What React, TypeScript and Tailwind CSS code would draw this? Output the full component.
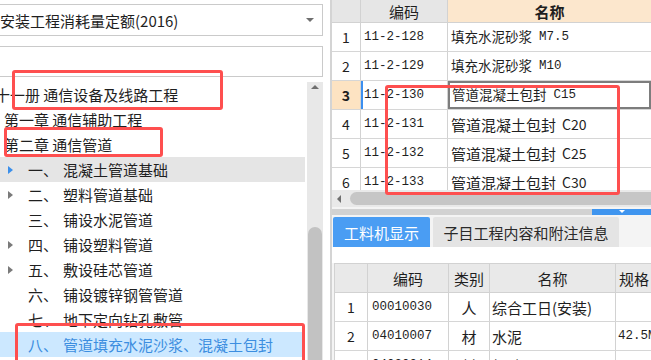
import type { ReactNode } from "react";

const treeChildren = [
  { num: "一、", label: "混凝土管道基础", arrow: "blue", hover: true },
  { num: "二、", label: "塑料管道基础", arrow: "gray" },
  { num: "三、", label: "铺设水泥管道" },
  { num: "四、", label: "铺设塑料管道", arrow: "gray" },
  { num: "五、", label: "敷设硅芯管道", arrow: "gray" },
  { num: "六、", label: "铺设镀锌钢管管道" },
  { num: "七、", label: "地下定向钻孔敷管" },
  { num: "八、", label: "管道填充水泥沙浆、混凝土包封", selected: true },
];

const quotaRows = [
  { n: "1", code: "11-2-128", name: "填充水泥砂浆", grade: "M7.5", big: false },
  { n: "2", code: "11-2-129", name: "填充水泥砂浆", grade: "M10", big: false },
  { n: "3", code: "11-2-130", name: "管道混凝土包封", grade: "C15", big: false, active: true },
  { n: "4", code: "11-2-131", name: "管道混凝土包封", grade: "C20", big: true },
  { n: "5", code: "11-2-132", name: "管道混凝土包封", grade: "C25", big: true },
  { n: "6", code: "11-2-133", name: "管道混凝土包封", grade: "C30", big: true },
];

const materialRows = [
  { n: "1", code: "00010030", type: "人", name: "综合工日(安装)", spec: "" },
  { n: "2", code: "04010007", type: "材", name: "水泥", spec: "42.5MPa" },
  { n: "3", code: "04030014", type: "材", name: "粗砂", spec: "" },
];

function RightArrow({ color }: { color: string }) {
  return color === "blue" ? (
    <span className="block h-0 w-0 border-y-[4px] border-l-[5px] border-y-transparent border-l-[#3b8fea]" />
  ) : (
    <span className="block h-0 w-0 border-y-[4px] border-l-[5px] border-y-transparent border-l-[#7a7a7a]" />
  );
}

function LeftPanel() {
  return (
    <aside className="flex w-[332px] shrink-0 flex-col border-r-2 border-[#d4d4d4] bg-white pt-[4px]">
      <div className="-ml-[8px] mr-[7px] flex h-[32px] items-center border border-[#cacaca] bg-white pl-[7px] pr-[8px] text-[15px] leading-none">
        <span>安装工程消耗量定额(2016)</span>
        <span className="ml-auto block h-0 w-0 border-x-[4px] border-t-[4px] border-x-transparent border-t-[#6f6f6f]" />
      </div>
      <div className="-ml-[8px] mr-[7px] mt-[10px] h-[31px] border border-[#cacaca] bg-white" />
      <div className="mt-[5px] flex min-h-0 flex-1">
        <div className="-ml-[8px] w-[313px] shrink-0 text-[15px] leading-none">
          <div className="flex h-[25px] items-center pl-[3px]">十一册 通信设备及线路工程</div>
          <div className="flex h-[25px] items-center pl-[12px]">第一章 通信辅助工程</div>
          <div className="flex h-[25px] items-center pl-[12px]">第二章 通信管道</div>
          {treeChildren.map((row) => (
            <div
              key={row.num}
              className={
                row.selected
                  ? "flex h-[25px] items-center bg-[#cce8ff] text-[#3c8ee0]"
                  : row.hover
                    ? "flex h-[25px] items-center bg-[#e5e5e5]"
                    : "flex h-[25px] items-center"
              }
            >
              <span className="flex w-[36px] shrink-0 pl-[16px]">{row.arrow && <RightArrow color={row.arrow} />}</span>
              <span className="w-[35px] shrink-0">{row.num}</span>
              <span className="whitespace-nowrap">{row.label}</span>
            </div>
          ))}
        </div>
        <div className="ml-[2px] flex w-[16px] shrink-0 flex-col items-center bg-[#e8e8e8]">
          <span className="mt-[3px] block h-0 w-0 border-x-[4px] border-b-[4px] border-x-transparent border-b-[#6f6f6f]" />
          <div className="mt-[138px] w-[14px] flex-1 rounded-t-full bg-[#c2c2c2]" />
        </div>
      </div>
    </aside>
  );
}

function Cell({ className, children }: { className: string; children?: ReactNode }) {
  return <div className={className}>{children}</div>;
}

function QuotaTable() {
  return (
    <div className="h-[190px] shrink-0 overflow-hidden bg-white">
      <div className="flex h-[23px] border-b border-[#d2d2d2] text-[15px] leading-none">
        <Cell className="w-[29px] shrink-0 border-r border-[#d2d2d2] bg-[#e6e6e6]" />
        <Cell className="flex w-[87px] shrink-0 items-center justify-center border-r border-[#d2d2d2] bg-[#e6e6e6]">编码</Cell>
        <Cell className="flex flex-1 items-center justify-center bg-[#fce7cd] font-bold">名称</Cell>
      </div>
      {quotaRows.map((r) => (
        <div key={r.n} className="flex h-[29px] border-b border-[#d6d6d6] leading-none">
          <Cell
            className={
              r.active
                ? "flex w-[29px] shrink-0 items-center justify-center border-r border-[#d2d2d2] bg-[#fde3c2] text-[14px] font-bold"
                : "flex w-[29px] shrink-0 items-center justify-center border-r border-[#d2d2d2] text-[14px]"
            }
          >
            {r.n}
          </Cell>
          <Cell
            className={
              r.active
                ? "flex w-[87px] shrink-0 items-center border-l-2 border-r border-l-[#3b8ff0] border-r-[#d2d2d2] pl-[1px] font-['Liberation_Mono',monospace] text-[12.5px]"
                : "flex w-[87px] shrink-0 items-center border-r border-[#d2d2d2] pl-[3px] font-['Liberation_Mono',monospace] text-[12.5px]"
            }
          >
            {r.code}
          </Cell>
          <Cell
            className={
              r.active
                ? "flex flex-1 items-center border-2 border-[#7d7d7d] pl-[2px] whitespace-nowrap"
                : "flex flex-1 items-center pl-[3px] whitespace-nowrap"
            }
          >
            {r.big ? (
              <>
                <span className="text-[15px]">{r.name}</span>
                <span className="ml-[6px] text-[14px]">{r.grade}</span>
              </>
            ) : (
              <>
                <span className="text-[13.5px]">{r.name}</span>
                <span className="ml-[7px] font-['Liberation_Mono',monospace] text-[12.5px]">{r.grade}</span>
              </>
            )}
          </Cell>
        </div>
      ))}
    </div>
  );
}

function MaterialTable() {
  return (
    <div className="ml-[2px] flex-1 border-l border-[#d2d2d2] bg-white text-[15px] leading-none">
      <div className="flex h-[30px] border-b border-t border-[#d2d2d2] bg-[#e9e9e9]">
        <Cell className="w-[33px] shrink-0 border-r border-[#d2d2d2]" />
        <Cell className="flex w-[81px] shrink-0 items-center justify-center border-r border-[#d2d2d2]">编码</Cell>
        <Cell className="flex w-[41px] shrink-0 items-center justify-center border-r border-[#d2d2d2]">类别</Cell>
        <Cell className="flex w-[126px] shrink-0 items-center justify-center border-r border-[#d2d2d2]">名称</Cell>
        <Cell className="flex w-[80px] shrink-0 items-center pl-[3px]">规格</Cell>
      </div>
      {materialRows.map((r) => (
        <div key={r.n} className="flex h-[29px] border-b border-[#d6d6d6]">
          <Cell className="flex w-[33px] shrink-0 items-center justify-center border-r border-[#d2d2d2] text-[14px]">{r.n}</Cell>
          <Cell className="flex w-[81px] shrink-0 items-center border-r border-[#d2d2d2] pl-[4px] font-['Liberation_Mono',monospace] text-[12.5px]">
            {r.code}
          </Cell>
          <Cell className="flex w-[41px] shrink-0 items-center justify-center border-r border-[#d2d2d2]">{r.type}</Cell>
          <Cell className="flex w-[126px] shrink-0 items-center border-r border-[#d2d2d2] pl-[2px] whitespace-nowrap">{r.name}</Cell>
          <Cell className="flex w-[80px] shrink-0 items-center overflow-hidden pl-[2px] font-['Liberation_Mono',monospace] text-[12.5px] whitespace-nowrap">
            {r.spec}
          </Cell>
        </div>
      ))}
    </div>
  );
}

function RightPanel() {
  return (
    <section className="flex min-w-0 flex-1 flex-col bg-[#f4f4f4]">
      <QuotaTable />
      <div className="flex h-[17px] shrink-0 items-center bg-[#e9e9e9]">
        <span className="ml-[5px] block h-0 w-0 border-y-[4px] border-r-[4px] border-y-transparent border-r-[#6f6f6f]" />
        <div className="ml-[9px] h-[13px] flex-1 rounded-l-full bg-[#c6c6c6]" />
      </div>
      <div className="flex h-[9px] shrink-0 flex-col justify-center">
        <div className="flex h-[6px] bg-[#d2d2d2]">
          <div className="ml-auto flex w-[59px] items-center justify-center bg-[#3f95ef]">
            <span className="block h-0 w-0 border-x-[3px] border-t-[3px] border-x-transparent border-t-white" />
          </div>
        </div>
      </div>
      <div className="flex h-[31px] shrink-0 items-end gap-[3px] pl-[1px] text-[15px] leading-none">
        <div className="flex h-[30px] w-[97px] items-center justify-center rounded-t-[2px] bg-[#4a9df3] text-white">工料机显示</div>
        <div className="flex h-[30px] w-[186px] items-center justify-center rounded-t-[2px] bg-[#e4e4e4] text-[#2a2a2a]">子目工程内容和附注信息</div>
      </div>
      <div className="h-[16px] shrink-0 bg-white" />
      <MaterialTable />
    </section>
  );
}

function Marks() {
  return (
    <>
      <div className="absolute left-[12px] top-[70px] h-[40px] w-[211px] rounded-[3px] border-[3px] border-[#fe4f4f]" />
      <div className="absolute left-[4px] top-[127px] h-[30px] w-[159px] rounded-[3px] border-[3px] border-[#fe4f4f]" />
      <div className="absolute left-[15px] top-[323px] h-[50px] w-[290px] rounded-[3px] border-[3px] border-[#fe4f4f]" />
      <div className="absolute left-[385px] top-[85px] h-[110px] w-[235px] rounded-[3px] border-[3px] border-[#fe4f4f]" />
    </>
  );
}

export default function App() {
  return (
    <div className="relative flex h-[360px] w-[651px] overflow-hidden bg-white font-['Noto_Sans_CJK_SC',sans-serif] text-[#1f1f1f]">
      <LeftPanel />
      <RightPanel />
      <Marks />
    </div>
  );
}
